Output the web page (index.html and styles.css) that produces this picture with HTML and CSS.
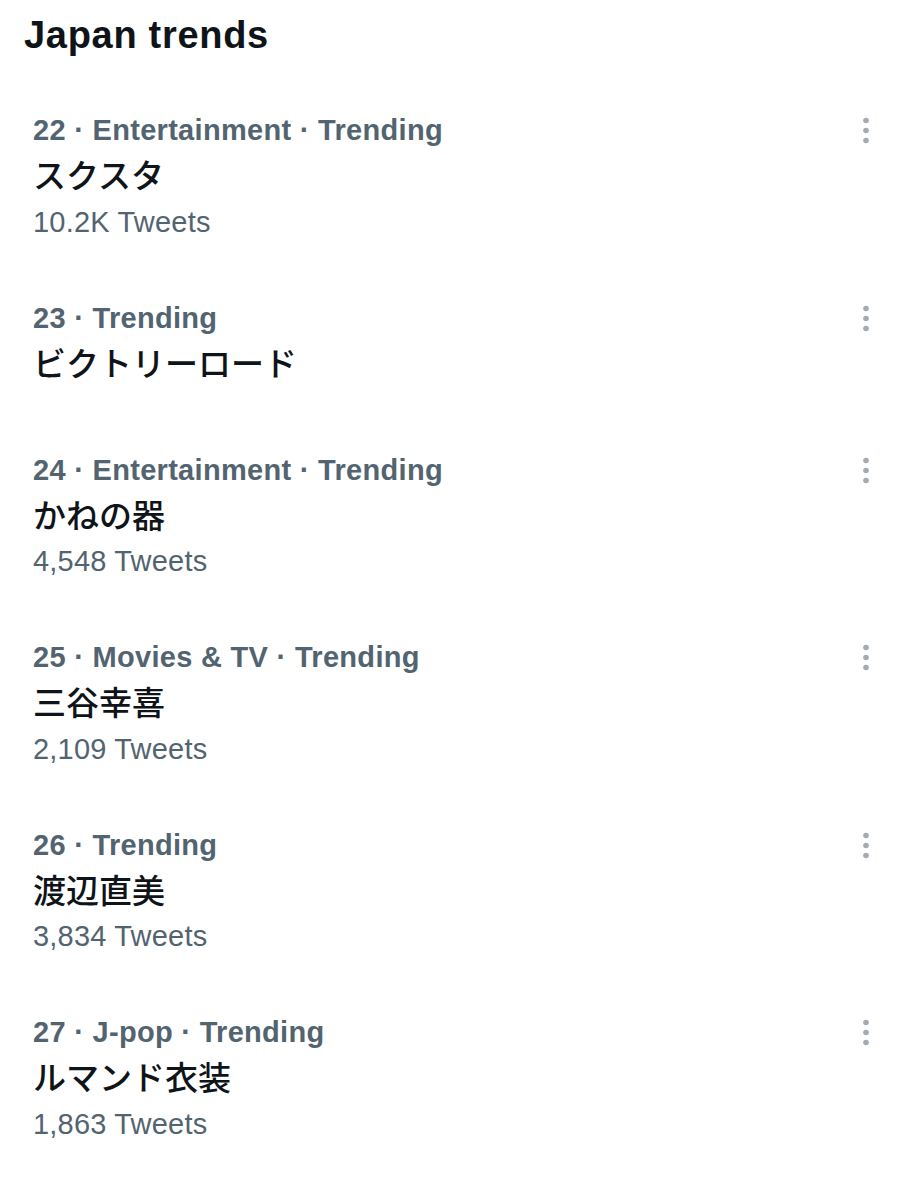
FILE: index.html
```html
<!DOCTYPE html>
<html lang="ja">
<head>
    <meta charset="UTF-8">
    <meta name="viewport" content="width=device-width, initial-scale=1.0">
    <title>Japan trends</title>
    <link rel="stylesheet" href="styles.css">
</head>
<body>

    <div class="page">
        <h1 class="title">Japan trends</h1>

        <ul class="trends">
            <li class="trend">
                <div class="trend-text">
                    <p class="meta">22 · Entertainment · Trending</p>
                    <p class="name">スクスタ</p>
                    <p class="count">10.2K Tweets</p>
                </div>
                <button class="more" aria-label="More">
                    <svg viewBox="0 0 20 40" width="20" height="40"><circle cx="10" cy="10.5" r="2.8"/><circle cx="10" cy="20.5" r="2.8"/><circle cx="10" cy="30.5" r="2.8"/></svg>
                </button>
            </li>
            <li class="trend">
                <div class="trend-text">
                    <p class="meta">23 · Trending</p>
                    <p class="name">ビクトリーロード</p>
                </div>
                <button class="more" aria-label="More">
                    <svg viewBox="0 0 20 40" width="20" height="40"><circle cx="10" cy="10.5" r="2.8"/><circle cx="10" cy="20.5" r="2.8"/><circle cx="10" cy="30.5" r="2.8"/></svg>
                </button>
            </li>
            <li class="trend">
                <div class="trend-text">
                    <p class="meta">24 · Entertainment · Trending</p>
                    <p class="name">かねの器</p>
                    <p class="count">4,548 Tweets</p>
                </div>
                <button class="more" aria-label="More">
                    <svg viewBox="0 0 20 40" width="20" height="40"><circle cx="10" cy="10.5" r="2.8"/><circle cx="10" cy="20.5" r="2.8"/><circle cx="10" cy="30.5" r="2.8"/></svg>
                </button>
            </li>
            <li class="trend">
                <div class="trend-text">
                    <p class="meta">25 · Movies &amp; TV · Trending</p>
                    <p class="name">三谷幸喜</p>
                    <p class="count">2,109 Tweets</p>
                </div>
                <button class="more" aria-label="More">
                    <svg viewBox="0 0 20 40" width="20" height="40"><circle cx="10" cy="10.5" r="2.8"/><circle cx="10" cy="20.5" r="2.8"/><circle cx="10" cy="30.5" r="2.8"/></svg>
                </button>
            </li>
            <li class="trend">
                <div class="trend-text">
                    <p class="meta">26 · Trending</p>
                    <p class="name">渡辺直美</p>
                    <p class="count">3,834 Tweets</p>
                </div>
                <button class="more" aria-label="More">
                    <svg viewBox="0 0 20 40" width="20" height="40"><circle cx="10" cy="10.5" r="2.8"/><circle cx="10" cy="20.5" r="2.8"/><circle cx="10" cy="30.5" r="2.8"/></svg>
                </button>
            </li>
            <li class="trend">
                <div class="trend-text">
                    <p class="meta">27 · J-pop · Trending</p>
                    <p class="name">ルマンド衣装</p>
                    <p class="count">1,863 Tweets</p>
                </div>
                <button class="more" aria-label="More">
                    <svg viewBox="0 0 20 40" width="20" height="40"><circle cx="10" cy="10.5" r="2.8"/><circle cx="10" cy="20.5" r="2.8"/><circle cx="10" cy="30.5" r="2.8"/></svg>
                </button>
            </li>
        </ul>
    </div>

</body>
</html>
```

FILE: styles.css
```css
body {
    margin: 0;
    background: #ffffff;
    font-family: "Liberation Sans", Arial, "Noto Sans CJK JP", sans-serif;
    color: #0f1419;
}

.page {
    padding: 13px 28px 0 24px;
}

.title {
    margin: 0 0 21px;
    font-size: 38px;
    line-height: 44px;
    font-weight: bold;
    letter-spacing: 0.7px;
}

.trends {
    list-style: none;
    margin: 0;
    padding: 0;
}

.trend {
    display: flex;
    justify-content: space-between;
    align-items: flex-start;
    padding: 32px 0 32px 9px;
}

.trend-text p {
    margin: 0;
}

.meta {
    font-size: 29px;
    line-height: 40px;
    font-weight: bold;
    color: #536471;
    letter-spacing: 0.3px;
}

.name {
    font-family: "Noto Sans CJK JP", sans-serif;
    font-size: 33px;
    line-height: 48px;
    font-weight: 500;
    color: #0f1419;
}

.trend-text .count {
    margin-top: 11.5px;
    font-size: 29px;
    line-height: 24px;
    color: #536471;
    letter-spacing: 0.2px;
}

.more {
    border: none;
    background: none;
    padding: 0;
    margin: 0;
    width: 20px;
    height: 40px;
    cursor: pointer;
}

.more svg {
    display: block;
    fill: #a3abb2;
}
```
